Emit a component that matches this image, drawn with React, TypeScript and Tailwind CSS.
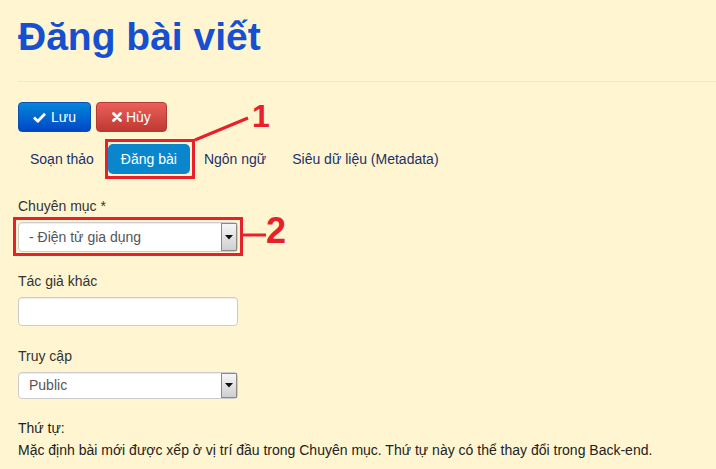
import React from "react";

function SelectBox({ value, h }: { value: string; h: string }) {
  return (
    <div className={`flex w-[220px] ${h} items-stretch rounded-[4px] border border-[#cccccc] bg-white shadow-[inset_0_1px_1px_rgba(0,0,0,0.075)]`}>
      <div className="flex flex-1 items-center pl-[10px] text-[14px] text-[#555555]">{value}</div>
      <div className="flex w-[16px] items-center justify-center border border-[#8a8a8a] bg-gradient-to-b from-[#f6f6f6] to-[#cfcfcf]">
        <svg width="8" height="5" viewBox="0 0 8 5">
          <path d="M0 0 L8 0 L4 4.5 Z" fill="#111" />
        </svg>
      </div>
    </div>
  );
}

export default function App() {
  return (
    <div
      className="relative h-[469px] w-[716px] overflow-hidden bg-[#fff6d1] pl-[18px] text-[#333333]"
      style={{ fontFamily: '"Liberation Sans", Arial, sans-serif' }}
    >
      <h1 className="border-b border-[#ece9dc] pb-[22px] pt-[15px] text-[39px] font-bold leading-[44px] text-[#1650d0]">
        Đăng bài viết
      </h1>

      <div className="mt-[20px] flex gap-[5px]">
        <button className="flex h-[30px] items-center gap-[5px] rounded-[4px] border border-[#0a4fb8] bg-gradient-to-b from-[#0a86d8] to-[#0046c6] px-[14px] text-[14px] text-white">
          <svg width="13" height="11" viewBox="0 0 13 11">
            <path d="M1 5.5 L4.8 9.2 L12 1.8" stroke="white" strokeWidth="2.8" fill="none" strokeLinejoin="round" />
          </svg>
          Lưu
        </button>
        <button className="flex h-[30px] items-center gap-[4px] rounded-[4px] border border-[#b53a35] bg-gradient-to-b from-[#ec5f5a] to-[#bf3832] px-[15px] text-[14px] text-white">
          <svg width="10" height="10" viewBox="0 0 10 10">
            <path d="M1.5 1.5 L8.5 8.5 M8.5 1.5 L1.5 8.5" stroke="white" strokeWidth="2.8" strokeLinecap="round" />
          </svg>
          Hủy
        </button>
      </div>

      <div className="mt-[12px] flex text-[14px] text-[#22306b]">
        <div className="mr-[2px] flex h-[30px] items-center px-[12px]">Soạn thảo</div>
        <div className="mr-[2px] flex h-[30px] items-center rounded-[5px] bg-[#0a87cc] px-[13px] text-white">Đăng bài</div>
        <div className="mr-[2px] flex h-[30px] items-center px-[12px]">Ngôn ngữ</div>
        <div className="flex h-[30px] items-center px-[12px]">Siêu dữ liệu (Metadata)</div>
      </div>

      <div className="mt-[22px] text-[14px] leading-[20px]">Chuyên mục *</div>
      <div className="mt-[6px]">
        <SelectBox value="- Điện tử gia dụng" h="h-[30px]" />
      </div>

      <div className="mt-[19px] text-[14px] leading-[20px]">Tác giả khác</div>
      <div className="mt-[6px] h-[29px] w-[220px] rounded-[4px] border border-[#cccccc] bg-white shadow-[inset_0_1px_1px_rgba(0,0,0,0.075)]" />

      <div className="mt-[20px] text-[14px] leading-[20px]">Truy cập</div>
      <div className="mt-[6px]">
        <SelectBox value="Public" h="h-[27px]" />
      </div>

      <div className="mt-[18px] text-[14px] leading-[22px] text-[#222222]">
        <div>Thứ tự:</div>
        <div>Mặc định bài mới được xếp ở vị trí đầu trong Chuyên mục. Thứ tự này có thể thay đổi trong Back-end.</div>
      </div>

      {/* Annotations */}
      <div className="absolute left-[105px] top-[139px] h-[40px] w-[90px] border-[3px] border-[#e8202a]" />
      <svg className="absolute left-0 top-0" width="716" height="469">
        <line x1="195" y1="140" x2="248" y2="118" stroke="#e8202a" strokeWidth="3" />
        <line x1="243" y1="235" x2="266" y2="235" stroke="#e8202a" strokeWidth="3" />
      </svg>
      <div className="absolute left-[252px] top-[98px] text-[32px] font-bold leading-[36px] text-[#e8202a]">1</div>
      <div className="absolute left-[13px] top-[217px] h-[39px] w-[230px] border-[3px] border-[#e8202a]" />
      <div className="absolute left-[266px] top-[211px] text-[36px] font-bold leading-[40px] text-[#e8202a]">2</div>
    </div>
  );
}
